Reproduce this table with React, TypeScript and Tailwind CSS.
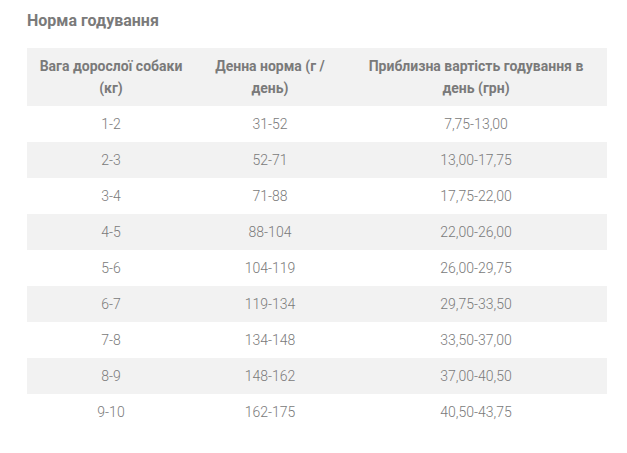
import React from "react";

const rows: [string, string, string][] = [
  ["1-2", "31-52", "7,75-13,00"],
  ["2-3", "52-71", "13,00-17,75"],
  ["3-4", "71-88", "17,75-22,00"],
  ["4-5", "88-104", "22,00-26,00"],
  ["5-6", "104-119", "26,00-29,75"],
  ["6-7", "119-134", "29,75-33,50"],
  ["7-8", "134-148", "33,50-37,00"],
  ["8-9", "148-162", "37,00-40,50"],
  ["9-10", "162-175", "40,50-43,75"],
];

export default function App() {
  return (
    <div
      className="w-[627px] h-[453px] bg-white px-[27px] pt-[11px]"
      style={{ fontFamily: "Roboto, 'Liberation Sans', sans-serif" }}
    >
      <h2 className="text-[16px] leading-[20px] font-bold text-[#7a7a7a]">Норма годування</h2>
      <table className="mt-[17px] w-[580px] border-collapse table-fixed">
        <colgroup>
          <col className="w-[168px]" />
          <col className="w-[150px]" />
          <col className="w-[262px]" />
        </colgroup>
        <thead>
          <tr className="bg-[#f2f2f2] h-[58px]">
            <th className="px-[10px] text-[14px] leading-[22px] font-bold text-[#7a7a7a] text-center align-middle">
              Вага дорослої собаки (кг)
            </th>
            <th className="px-[12px] text-[14px] leading-[22px] font-bold text-[#7a7a7a] text-center align-middle">
              Денна норма (г / день)
            </th>
            <th className="px-[14px] text-[14px] leading-[22px] font-bold text-[#7a7a7a] text-center align-middle">
              Приблизна вартість годування в день (грн)
            </th>
          </tr>
        </thead>
        <tbody>
          {rows.map((r, i) => (
            <tr key={i} className={`h-[36px] ${i % 2 === 1 ? "bg-[#f2f2f2]" : "bg-white"}`}>
              {r.map((c, j) => (
                <td key={j} className="text-center align-middle text-[14px] font-light text-[#7a7a7a]">
                  {c}
                </td>
              ))}
            </tr>
          ))}
        </tbody>
      </table>
    </div>
  );
}
